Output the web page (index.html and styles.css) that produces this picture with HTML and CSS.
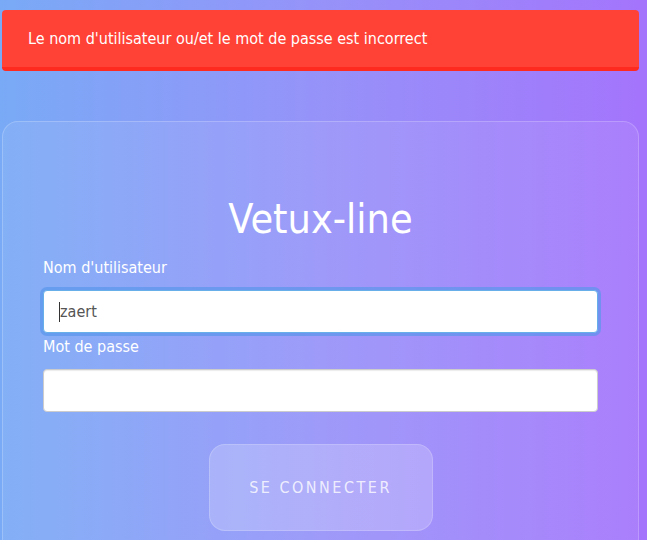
FILE: index.html
```html
<!DOCTYPE html>
<html lang="fr">
<head>
<meta charset="utf-8">
<title>Vetux-line</title>
<link rel="stylesheet" href="styles.css">
</head>
<body>
<div class="page">
  <div class="alert">Le nom d'utilisateur ou/et le mot de passe est incorrect</div>
  <form class="card">
    <h1 class="title">Vetux-line</h1>
    <label class="label" for="user">Nom d'utilisateur</label>
    <div class="field field-focus"><span class="caret"></span><span class="value">zaert</span></div>
    <label class="label" for="pass">Mot de passe</label>
    <div class="field"></div>
    <div class="actions">
      <button type="button" class="btn">SE CONNECTER</button>
    </div>
  </form>
</div>
</body>
</html>
```

FILE: styles.css
```css
html, body {
  margin: 0;
  padding: 0;
  height: 100%;
  overflow: hidden;
}
body {
  background: linear-gradient(to right, #79aaf6 0%, #9692f9 50%, #a474fc 100%);
  font-family: "DejaVu Sans Condensed", "DejaVu Sans", sans-serif;
  color: #fff;
}
.page {
  padding: 10px 8px 0 2px;
  display: flex;
  flex-direction: column;
}
.alert {
  background: #ff4136;
  border-bottom: 4px solid #ff2a1f;
  border-radius: 4px;
  height: 57px;
  display: flex;
  align-items: center;
  padding-left: 26px;
  font-size: 16px;
  color: #fff;
}
.card {
  margin-top: 50px;
  border: 1px solid rgba(255,255,255,0.2);
  border-radius: 16px;
  background: rgba(255,255,255,0.08);
  padding: 73px 40px 0 40px;
  display: flex;
  flex-direction: column;
  height: 360px;
}
.title {
  margin: 0 0 13px 0;
  font-weight: normal;
  font-size: 41px;
  line-height: 48px;
  text-align: center;
}
.label {
  display: block;
  font-size: 16px;
  line-height: 24px;
  margin-bottom: 10px;
}
.field {
  height: 41px;
  background: #fff;
  border: 1px solid #ccc;
  border-radius: 4px;
  box-shadow: inset 0 1px 1px rgba(0,0,0,0.08);
  margin-bottom: 2px;
  display: flex;
  align-items: center;
  padding-left: 15px;
  color: #555;
  font-size: 16px;
}
.field-focus {
  border-color: #66afe9;
  box-shadow: 0 0 0 3px rgba(90,150,235,0.7);
}
.caret {
  width: 1px;
  height: 20px;
  background: #333;
}
.actions {
  display: flex;
  justify-content: center;
  margin-top: 30px;
}
.btn {
  width: 224px;
  height: 87px;
  border-radius: 16px;
  border: 1px solid rgba(255,255,255,0.18);
  background: rgba(255,255,255,0.2);
  color: rgba(255,255,255,0.8);
  font-family: inherit;
  font-size: 16px;
  letter-spacing: 2.5px;
}
```
